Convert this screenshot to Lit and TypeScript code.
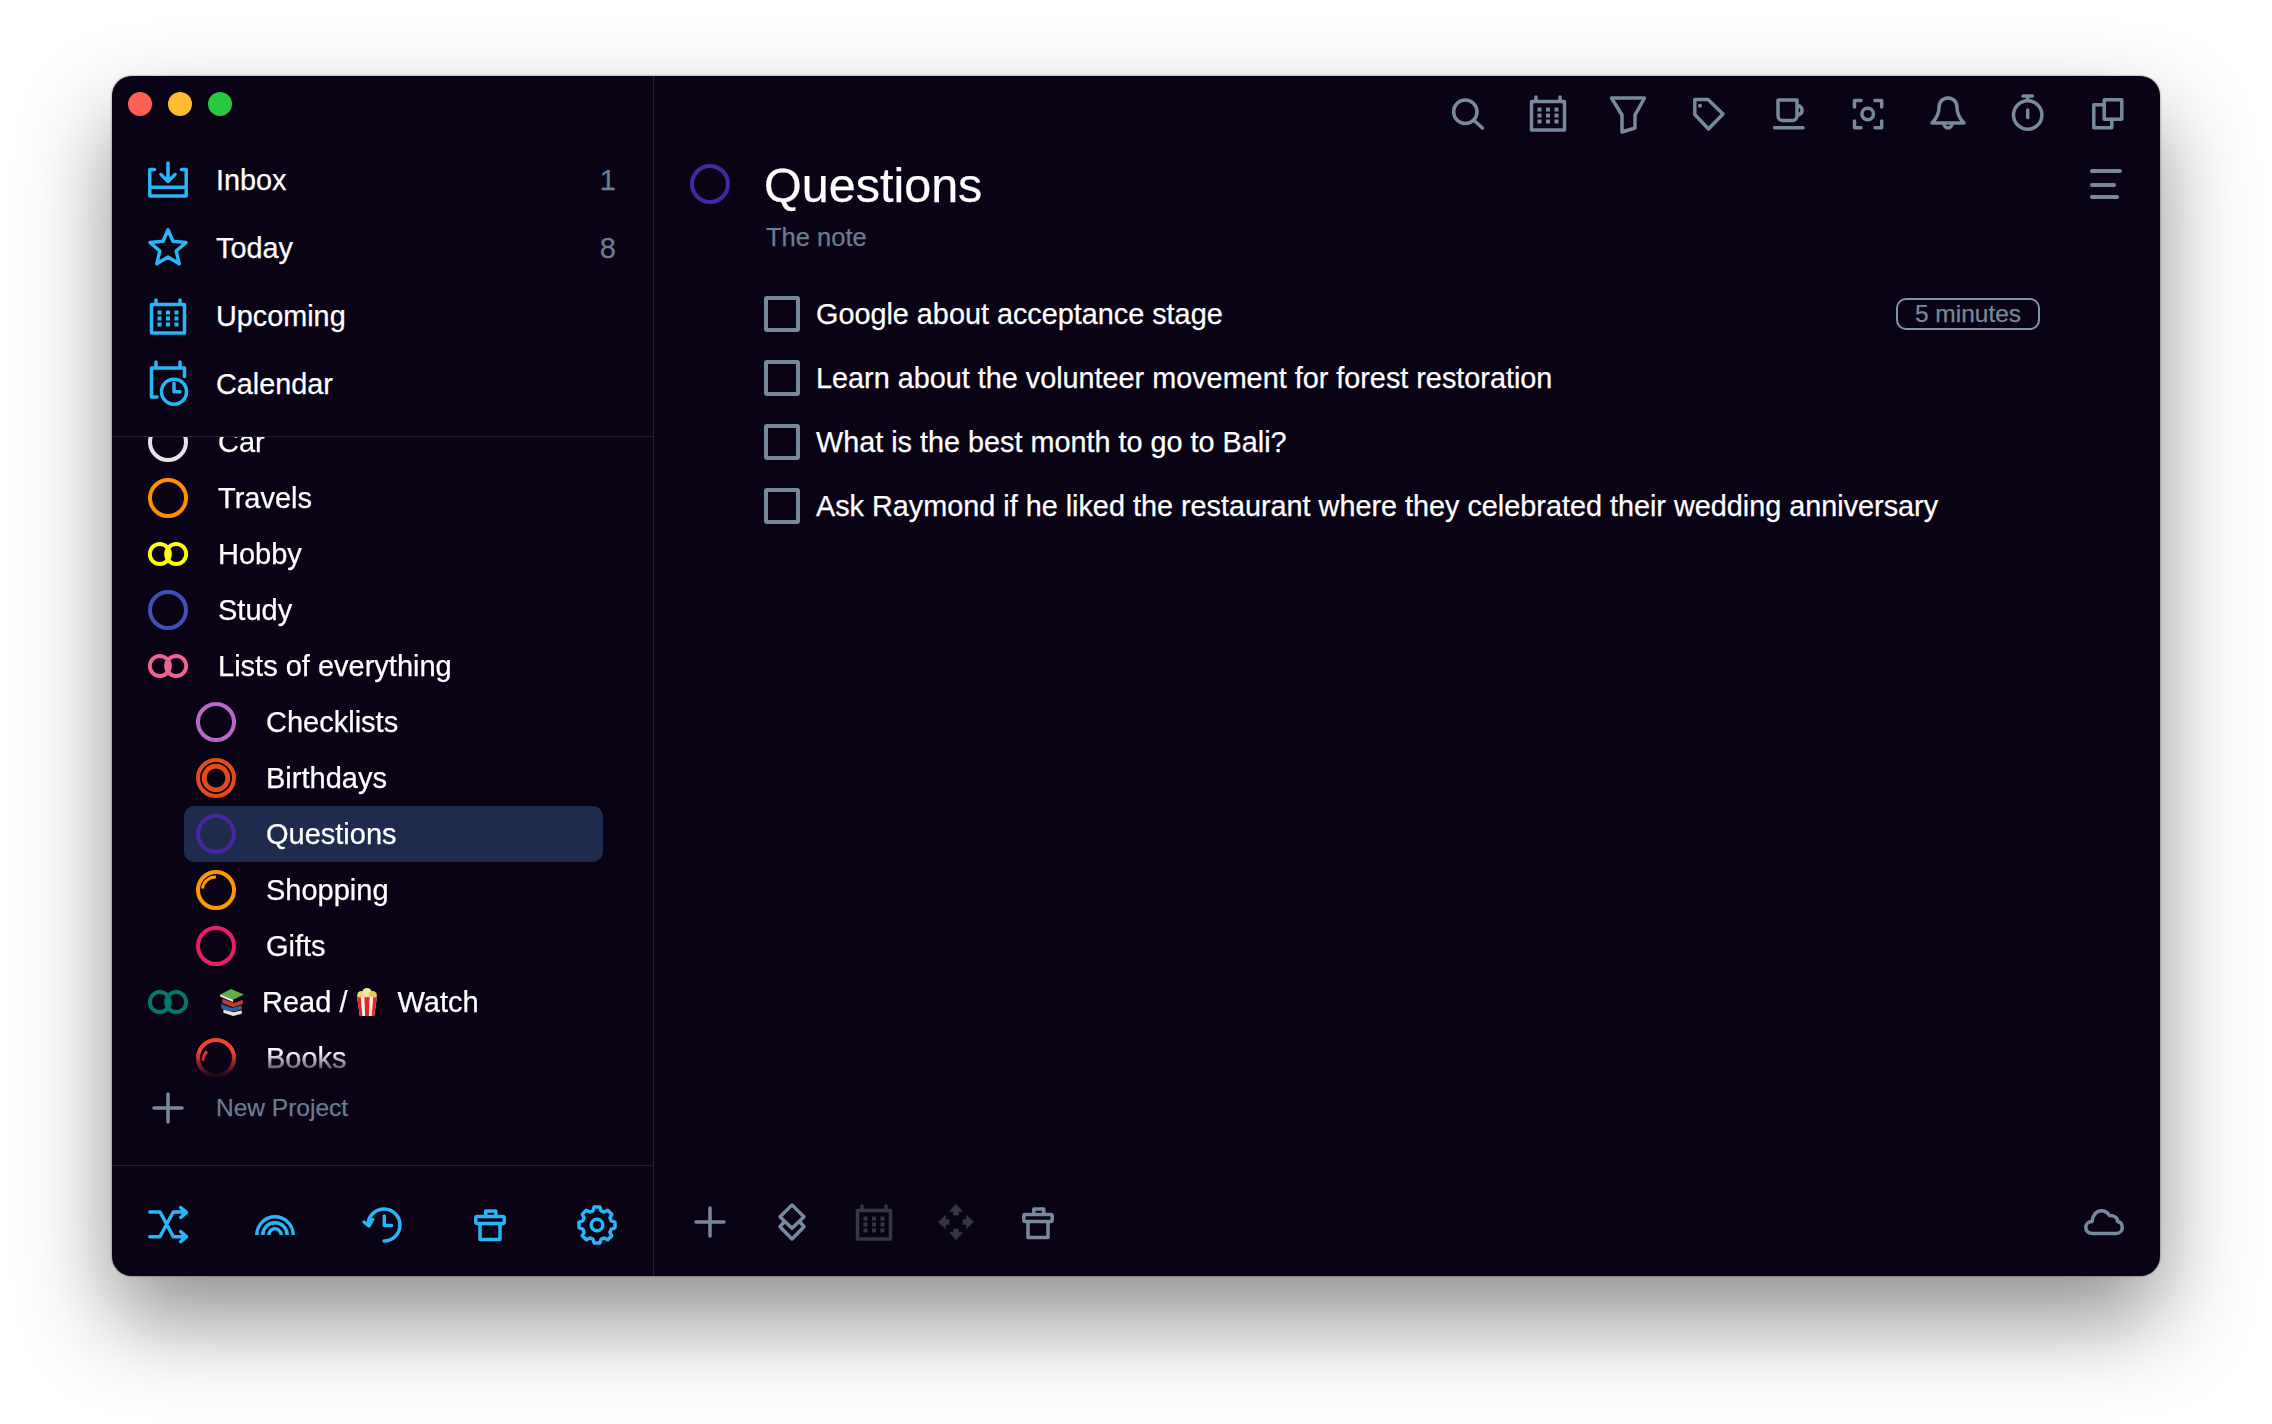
import { LitElement, html, css, svg } from "lit";
import { customElement } from "lit/decorators.js";
import { classMap } from "lit/directives/class-map.js";

// 8 tooth gear outline, same box as the other icons
const gearPoints = () => {
  const pts: string[] = [];
  const at = (deg: number, r: number) => {
    const a = (deg * Math.PI) / 180;
    return `${(20 + r * Math.cos(a)).toFixed(2)} ${(21 + r * Math.sin(a)).toFixed(2)}`;
  };
  for (let i = 0; i < 8; i++) {
    const a = i * 45 - 90;
    pts.push(at(a - 9, 18.2), at(a + 9, 18.2), at(a + 16, 14.8), at(a + 29, 14.8));
  }
  return "M" + pts.join("L") + "Z";
};

const calendarDots = [11.5, 20, 28.5].flatMap((x) =>
  [16.5, 22.5, 28.5].map((y) => svg`<rect class="f" x=${x - 2} y=${y - 2} width="4" height="4" />`)
);

const arrow = "M20 2.5L26.5 9.5H22.5V13H17.5V9.5H13.5Z";

const icons: Record<string, unknown> = {
  inbox: svg`<path d="M6.5 9.5H1.8V36H38.2V9.5H33.5M1.8 27.3H38.2M20 3V21M13 14.5L20 21.5L27 14.5" />`,
  star: svg`<path d="M20 1.8L25 13.2L38 14.5L28.2 23L31.2 35.8L20 29L8.8 35.8L11.8 23L2 14.5L15 13.2Z" />`,
  calendar: svg`<rect x="3.5" y="8.5" width="33" height="28.5" /><path d="M8 4V8M32 4V8" />${calendarDots}`,
  calendarClock: svg`<path d="M8 -2V3M32 -2V3M9 33H3.5V4H36.5V12.5" /><circle cx="26" cy="27.7" r="12.5" /><path d="M26 19.5V27.7H32" />`,
  plus: svg`<path d="M20 6V34M6 20H34" />`,
  shuffle: svg`<path d="M1.8 8H12L25.3 32.7H38M1.8 32.7H12L25.3 8H38M32.7 3.5L38.5 8.3L32.7 13.3M32.7 27.7L38.5 32.7L32.7 37.7" />`,
  rainbow: svg`<path stroke-linecap="butt" d="M1.8 31A18.2 18.2 0 0 1 38.2 31M7.8 31A12.2 12.2 0 0 1 32.2 31M13.8 31A6.2 6.2 0 0 1 26.2 31" />`,
  history: svg`<path d="M5 20A16 16 0 1 1 21 37M1 18L6 22L9.7 15.5M21.3 12V21.5H28.5" />`,
  trash: svg`<rect x="5.8" y="12.5" width="28.4" height="7" rx="1.5" /><path d="M10 20V35.5H30V20M15.8 12V7H25.8V12" />`,
  gear: svg`<path d=${gearPoints()} /><circle cx="20" cy="21" r="5.8" />`,
  search: svg`<circle cx="17.3" cy="18.7" r="11.7" /><path d="M26 27.5L34.5 35" />`,
  funnel: svg`<path d="M3.5 5H36.5L27 22V35L14 39V22Z" />`,
  tag: svg`<path d="M6.8 6.5H20L35 21L20.5 36L6.8 21.5Z" /><circle class="f" cx="12" cy="12.7" r="2" />`,
  cup: svg`<path d="M10 7H29V23A4.5 4.5 0 0 1 24.5 27.5H14.5A4.5 4.5 0 0 1 10 23ZM30 12.5A4.8 4.8 0 0 1 30 22M6.5 34.7H35" />`,
  focus: svg`<path d="M6.5 14V7.5H13M27 7.5H33.7V14M6.5 28V34.7H13M27 34.7H33.7V28" /><circle cx="19.7" cy="21" r="5.8" />`,
  bell: svg`<path d="M4 30C9 25 11 20 11 14.5C11 8.5 15 5 20 5C25 5 29 8.5 29 14.5C29 20 31 25 36 30ZM16 31A4 4 0 0 0 24 31" />`,
  timer: svg`<circle cx="19.7" cy="22" r="14.2" /><path d="M15 3H24.5M19.7 3V7M19.7 17V24.5" />`,
  copy: svg`<rect x="16.2" y="6.8" width="17.6" height="19.4" /><path d="M16.2 11.8H5.8V34.8H23.8V26.2" />`,
  layers: svg`<path d="M20 3L32 14.7L20 26.3L8 14.7ZM12.5 19.5L8 24.7L20 37L32 24.7L27.5 19.5" />`,
  move: svg`<g class="solid">${[0, 90, 180, 270].map((r) => svg`<path transform="rotate(${r} 20 20)" d=${arrow} />`)}</g>`,
  cloud: svg`<path d="M9 31.5C4.5 31.5 1.8 29 1.8 25.5C1.8 22 4.5 19.5 8 19.5C8.5 13 12.5 8.8 17.5 8.8C21 8.8 23.5 10.5 25.5 13.5C30.5 13.5 34 16 33.5 19.5C36.5 20 38.3 22.5 38.3 25.5C38.3 29 35.5 31.5 32 31.5Z" />`,
};

const ic = (name: string, cls = "") => html`<svg class="icon ${cls}" viewBox="0 0 40 40">${icons[name]}</svg>`;

type Ring = "single" | "double" | "birthday" | "shopping" | "books";

const ring = (kind: Ring, color: string) => {
  const marks = {
    single: svg`<circle cx="20" cy="20" r="18" />`,
    double: svg`<g class="thin"><circle cx="11.8" cy="20" r="10" /><circle cx="28.2" cy="20" r="10" /></g>`,
    birthday: svg`<circle cx="20" cy="20" r="18" /><circle cx="20" cy="20" r="11.8" stroke-width="4.8" />`,
    shopping: svg`<circle cx="20" cy="20" r="18" /><path d="M6.5 18.5A13 13 0 0 1 20 7" stroke-width="3" />`,
    books: svg`<circle cx="20" cy="20" r="18" /><path d="M7 23A13 13 0 0 1 11 13.5" stroke-width="3" />`,
  };
  return html`<svg class="ring" viewBox="0 0 40 40" style="color:${color}">${marks[kind]}</svg>`;
};

// small stand-ins for the two emoji, no emoji font is installed
const booksEmoji = html`<svg class="emoji stack" viewBox="0 0 23 25">
  <path fill="#5fae4a" d="M1 5L11 0L23 5L13 10Z" />
  <path fill="#f2f2f2" d="M1 5L13 10V12L1 7Z" />
  <path fill="#c43a2f" d="M3 9L14 13L22 10V14L13 17L3 13Z" />
  <path fill="#2f5fa8" d="M2 14L12 17.5L21 15V19L12 21L2 18Z" />
  <path fill="#e9e4d8" d="M4 19L13 21.5L21 20V23L13 25L4 22Z" />
</svg>`;

const popcornEmoji = html`<svg class="emoji corn" viewBox="0 0 21 27">
  <circle fill="#f4d27a" cx="5" cy="7" r="4" />
  <circle fill="#f7e3a1" cx="10.5" cy="4.5" r="4.5" />
  <circle fill="#f0c766" cx="16" cy="7" r="4" />
  <path fill="#f3f0ea" d="M1 9H20L17.5 27H3.5Z" />
  <path fill="#d92b2b" d="M1 9H4.5L6 27H3.5ZM8 9H13L12.3 27H8.7ZM16.5 9H20L17.5 27H15Z" />
</svg>`;

const nav = [
  { icon: "inbox", label: "Inbox", count: "1" },
  { icon: "star", label: "Today", count: "8" },
  { icon: "calendar", label: "Upcoming", count: "" },
  { icon: "calendarClock", label: "Calendar", count: "" },
];

const projects: { label: string; color: string; kind: Ring; child?: boolean; selected?: boolean }[] = [
  { label: "Car", color: "#e4e4e4", kind: "single" },
  { label: "Travels", color: "#ff8f00", kind: "single" },
  { label: "Hobby", color: "#ffff00", kind: "double" },
  { label: "Study", color: "#3f51b5", kind: "single" },
  { label: "Lists of everything", color: "#f06292", kind: "double" },
  { label: "Checklists", color: "#ba68c8", kind: "single", child: true },
  { label: "Birthdays", color: "#e64a19", kind: "birthday", child: true },
  { label: "Questions", color: "#4527a0", kind: "single", child: true, selected: true },
  { label: "Shopping", color: "#ff9800", kind: "shopping", child: true },
  { label: "Gifts", color: "#e91e63", kind: "single", child: true },
];

const tasks = [
  { text: "Google about acceptance stage", badge: "5 minutes" },
  { text: "Learn about the volunteer movement for forest restoration" },
  { text: "What is the best month to go to Bali?" },
  { text: "Ask Raymond if he liked the restaurant where they celebrated their wedding anniversary" },
];

@customElement("app-root")
export class AppRoot extends LitElement {
  static styles = css`
    :host {
      display: block;
      width: 2272px;
      height: 1424px;
      padding: 76px 112px 0;
      box-sizing: border-box;
      background: #fff;
      font-family: "Liberation Sans", Arial, sans-serif;
      color: #fff;
      -webkit-text-stroke: 0.25px currentColor;
    }

    .window {
      display: flex;
      width: 2048px;
      height: 1200px;
      background: #0a0316;
      border-radius: 20px;
      overflow: hidden;
      box-shadow: 0 0 2px rgba(0, 0, 0, 0.6), 0 44px 90px rgba(0, 0, 0, 0.44);
    }

    .icon {
      flex: none;
      width: 40px;
      height: 40px;
      overflow: visible;
      fill: none;
      stroke: currentColor;
      stroke-width: 3.5;
      stroke-linecap: round;
      stroke-linejoin: round;
    }

    .icon .f {
      fill: currentColor;
      stroke: none;
    }

    .icon .solid {
      fill: currentColor;
      stroke: currentColor;
      stroke-width: 0.6;
    }

    .ring {
      flex: none;
      width: 40px;
      height: 40px;
      fill: none;
      stroke: currentColor;
      stroke-width: 4;
    }

    .ring .thin {
      stroke-width: 4;
    }

    .blue {
      color: #29b6f6;
    }

    .grey {
      color: #78899d;
    }

    .dim {
      color: #343846;
    }

    /* sidebar */
    .sidebar {
      flex: none;
      display: flex;
      flex-direction: column;
      width: 541px;
      border-right: 1px solid #22202f;
    }

    .lights {
      display: flex;
      gap: 16px;
      height: 70px;
      padding: 16px 0 0 16px;
      box-sizing: border-box;
    }

    .lights span {
      width: 24px;
      height: 24px;
      border-radius: 50%;
    }

    .red {
      background: #ff5f57;
    }

    .yellow {
      background: #febc2e;
    }

    .green {
      background: #28c840;
    }

    .nav-row {
      display: flex;
      align-items: center;
      height: 68px;
      padding: 0 37px 0 36px;
      gap: 28px;
      font-size: 28.8px;
    }

    .nav-row .count {
      margin-left: auto;
      color: #6b7d92;
      font-size: 29px;
    }

    .rule {
      flex: none;
      height: 1px;
      margin-top: 18px;
      background: #22202f;
    }

    .scroll {
      flex: none;
      height: 643px;
      overflow: hidden;
      -webkit-mask-image: linear-gradient(#000 615px, transparent 641px);
      mask-image: linear-gradient(#000 615px, transparent 641px);
    }

    .project-list {
      margin-top: -23px;
    }

    .project {
      display: flex;
      align-items: center;
      height: 56px;
      padding-left: 36px;
      gap: 30px;
      font-size: 29px;
    }

    .project.child {
      padding-left: 84px;
    }

    .project.selected {
      margin: 0 50px 0 72px;
      padding-left: 12px;
      background: #1e2b4c;
      border-radius: 10px;
    }

    .project .mixed {
      display: flex;
      align-items: center;
      margin-left: 1px;
    }

    .emoji {
      flex: none;
      display: block;
    }

    .emoji.stack {
      width: 25px;
      height: 27px;
      margin-right: 18px;
    }

    .emoji.corn {
      width: 22px;
      height: 28px;
      margin: 0 19px 0 9px;
    }

    .new-project {
      display: flex;
      align-items: center;
      flex: none;
      height: 56px;
      padding-left: 36px;
      gap: 28px;
      font-size: 24.5px;
      color: #6b7d92;
    }

    .foot {
      display: flex;
      justify-content: space-between;
      margin-top: auto;
      height: 111px;
      padding: 38px 36px 0;
      box-sizing: border-box;
      border-top: 1px solid #22202f;
    }

    /* main pane */
    .main {
      flex: 1;
      display: flex;
      flex-direction: column;
      min-width: 0;
    }

    .top-bar {
      display: flex;
      justify-content: flex-end;
      gap: 40px;
      padding: 17px 32px 0 0;
    }

    .title-row {
      display: flex;
      align-items: center;
      height: 60px;
      margin-top: 21px;
      padding: 0 38px 0 36px;
      gap: 34px;
    }

    .title-row h1 {
      flex: 1;
      margin: 2px 0 0;
      font-size: 48.5px;
      font-weight: 400;
      line-height: 60px;
    }

    .lines {
      width: 32px;
      height: 30px;
      fill: none;
      stroke: #78899d;
      stroke-width: 4;
      stroke-linecap: round;
    }

    .note {
      margin: 8px 0 0 112px;
      font-size: 25.5px;
      line-height: 30px;
      color: #6b7c90;
    }

    .tasks {
      display: flex;
      flex-direction: column;
      margin-top: 30px;
      padding: 0 120px 0 110px;
    }

    .task {
      display: flex;
      align-items: center;
      height: 64px;
      gap: 16px;
      font-size: 28.8px;
    }

    .check {
      flex: none;
      width: 36px;
      height: 36px;
      box-sizing: border-box;
      border: 4px solid #78899d;
      border-radius: 3px;
    }

    .badge {
      margin-left: auto;
      width: 144px;
      height: 32px;
      box-sizing: border-box;
      border: 2px solid #8093a8;
      border-radius: 10px;
      font-size: 24.5px;
      line-height: 28px;
      text-align: center;
      color: #78899d;
    }

    .tools {
      display: flex;
      gap: 42px;
      margin-top: auto;
      padding: 0 36px 34px;
    }

    .tools .cloud {
      margin-left: auto;
    }
  `;

  render() {
    return html`
      <div class="window">
        <aside class="sidebar">
          <div class="lights">
            <span class="red"></span><span class="yellow"></span><span class="green"></span>
          </div>
          ${nav.map(
            (n) => html`
              <div class="nav-row">
                ${ic(n.icon, "blue")}<span>${n.label}</span>
                ${n.count ? html`<span class="count">${n.count}</span>` : ""}
              </div>
            `
          )}
          <div class="rule"></div>
          <div class="scroll">
            <div class="project-list">
              ${projects.map(
                (p) => html`
                  <div class=${classMap({ project: true, child: !!p.child, selected: !!p.selected })}>
                    ${ring(p.kind, p.color)}<span>${p.label}</span>
                  </div>
                `
              )}
              <div class="project">
                ${ring("double", "#00796b")}
                <span class="mixed">${booksEmoji}<span>Read /</span>${popcornEmoji}<span>Watch</span></span>
              </div>
              <div class="project child">${ring("books", "#f44336")}<span>Books</span></div>
            </div>
          </div>
          <div class="new-project">${ic("plus", "grey")}<span>New Project</span></div>
          <div class="foot">
            ${["shuffle", "rainbow", "history", "trash", "gear"].map((n) => ic(n, "blue"))}
          </div>
        </aside>

        <section class="main">
          <div class="top-bar">
            ${["search", "calendar", "funnel", "tag", "cup", "focus", "bell", "timer", "copy"].map((n) =>
              ic(n, "grey")
            )}
          </div>
          <div class="title-row">
            ${ring("single", "#4527a0")}
            <h1>Questions</h1>
            <svg class="lines" viewBox="0 0 32 30">
              <path d="M2 2H30M2 16H24M2 28H27" />
            </svg>
          </div>
          <div class="note">The note</div>
          <div class="tasks">
            ${tasks.map(
              (t) => html`
                <div class="task">
                  <span class="check"></span><span>${t.text}</span>
                  ${t.badge ? html`<span class="badge">${t.badge}</span>` : ""}
                </div>
              `
            )}
          </div>
          <div class="tools">
            ${ic("plus", "grey")}${ic("layers", "grey")}${ic("calendar", "dim")}${ic("move", "dim")}${ic("trash", "grey")}
            ${ic("cloud", "grey cloud")}
          </div>
        </section>
      </div>
    `;
  }
}
